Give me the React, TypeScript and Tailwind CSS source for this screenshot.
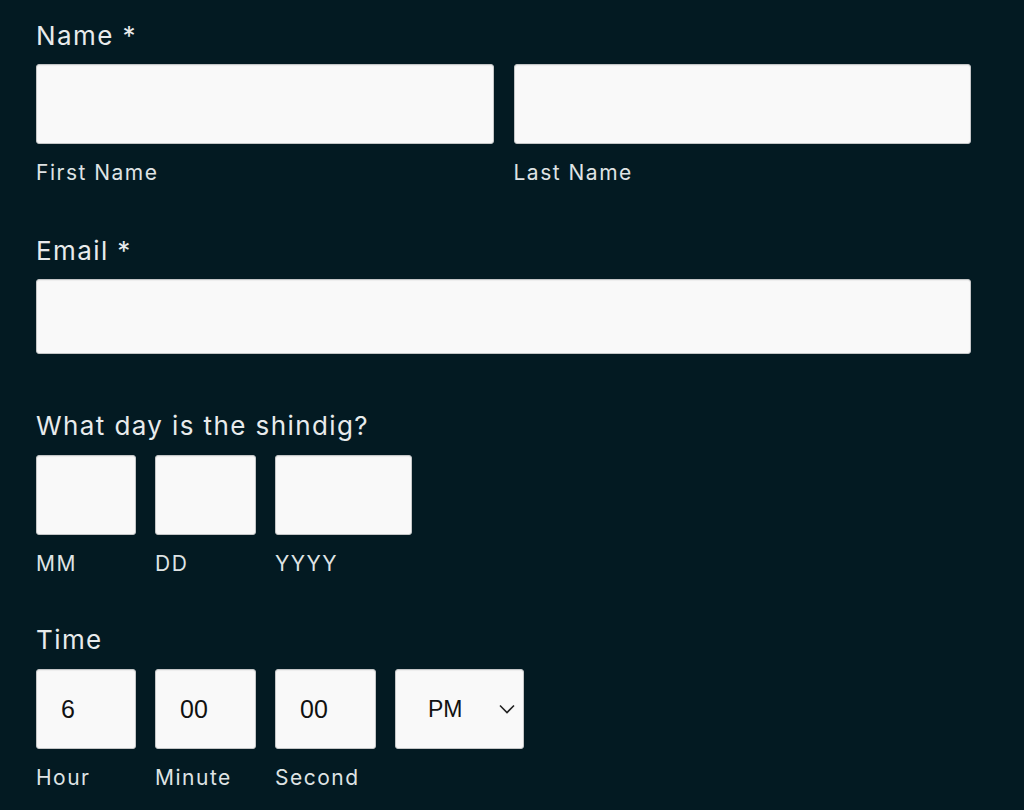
const field =
  "block rounded-[3px] border border-[#c4c6c7] bg-[#f9f9f9] shadow-[inset_0_1px_1px_rgba(0,0,0,0.05)] outline-none";

const valueText = "font-['Liberation_Sans',Arial,sans-serif] text-[25px] text-[#111]";

function Label({ children }: { children: React.ReactNode }) {
  return (
    <div className="text-[26px] leading-[32px] tracking-[1.4px] text-[#e8ebec]">
      {children}
    </div>
  );
}

function SubLabel({ children }: { children: React.ReactNode }) {
  return (
    <div className="mt-[17px] text-[21px] leading-[24px] tracking-[1.5px] text-[#dfe3e4]">
      {children}
    </div>
  );
}

export default function App() {
  return (
    <div className="min-h-[810px] bg-[#031a22] pt-[20px] pl-[36px] font-['Inter',sans-serif]">
      <div className="w-[935px]">

        {/* Name */}

        <Label>Name *</Label>

        <div className="mt-[12px] grid grid-cols-2 gap-[20px]">
          <div>
            <input className={`${field} h-[80px] w-full`} />
            <SubLabel>First Name</SubLabel>
          </div>
          <div>
            <input className={`${field} h-[80px] w-full`} />
            <SubLabel>Last Name</SubLabel>
          </div>
        </div>

        {/* Email */}

        <div className="mt-[50px]">
          <Label>Email *</Label>
          <input className={`${field} mt-[12px] h-[75px] w-full`} />
        </div>

        {/* Date */}

        <div className="mt-[56px]">
          <Label>What day is the shindig?</Label>
          <div className="mt-[13px] flex gap-[19px]">
            <div className="w-[100px]">
              <input className={`${field} h-[80px] w-full`} />
              <SubLabel>MM</SubLabel>
            </div>
            <div className="w-[101px]">
              <input className={`${field} h-[80px] w-full`} />
              <SubLabel>DD</SubLabel>
            </div>
            <div className="w-[137px]">
              <input className={`${field} h-[80px] w-full`} />
              <SubLabel>YYYY</SubLabel>
            </div>
          </div>
        </div>

        {/* Time */}

        <div className="mt-[48px]">
          <Label>Time</Label>
          <div className="mt-[13px] flex gap-[19px]">
            <div className="w-[100px]">
              <input defaultValue="6" className={`${field} ${valueText} h-[80px] w-full pl-[24px]`} />
              <SubLabel>Hour</SubLabel>
            </div>
            <div className="w-[101px]">
              <input defaultValue="00" className={`${field} ${valueText} h-[80px] w-full pl-[24px]`} />
              <SubLabel>Minute</SubLabel>
            </div>
            <div className="w-[101px]">
              <input defaultValue="00" className={`${field} ${valueText} h-[80px] w-full pl-[24px]`} />
              <SubLabel>Second</SubLabel>
            </div>
            <div className={`${field} flex h-[80px] w-[129px] items-center justify-between pl-[32px] pr-[8px]`}>
              <span className="font-['Liberation_Sans',Arial,sans-serif] text-[23px] text-[#111]">PM</span>
              <svg width="16" height="10" viewBox="0 0 16 10" fill="none">
                <path d="M1 1.5 L8 8.5 L15 1.5" stroke="#222" strokeWidth="1.6" />
              </svg>
            </div>
          </div>
        </div>

      </div>
    </div>
  );
}
